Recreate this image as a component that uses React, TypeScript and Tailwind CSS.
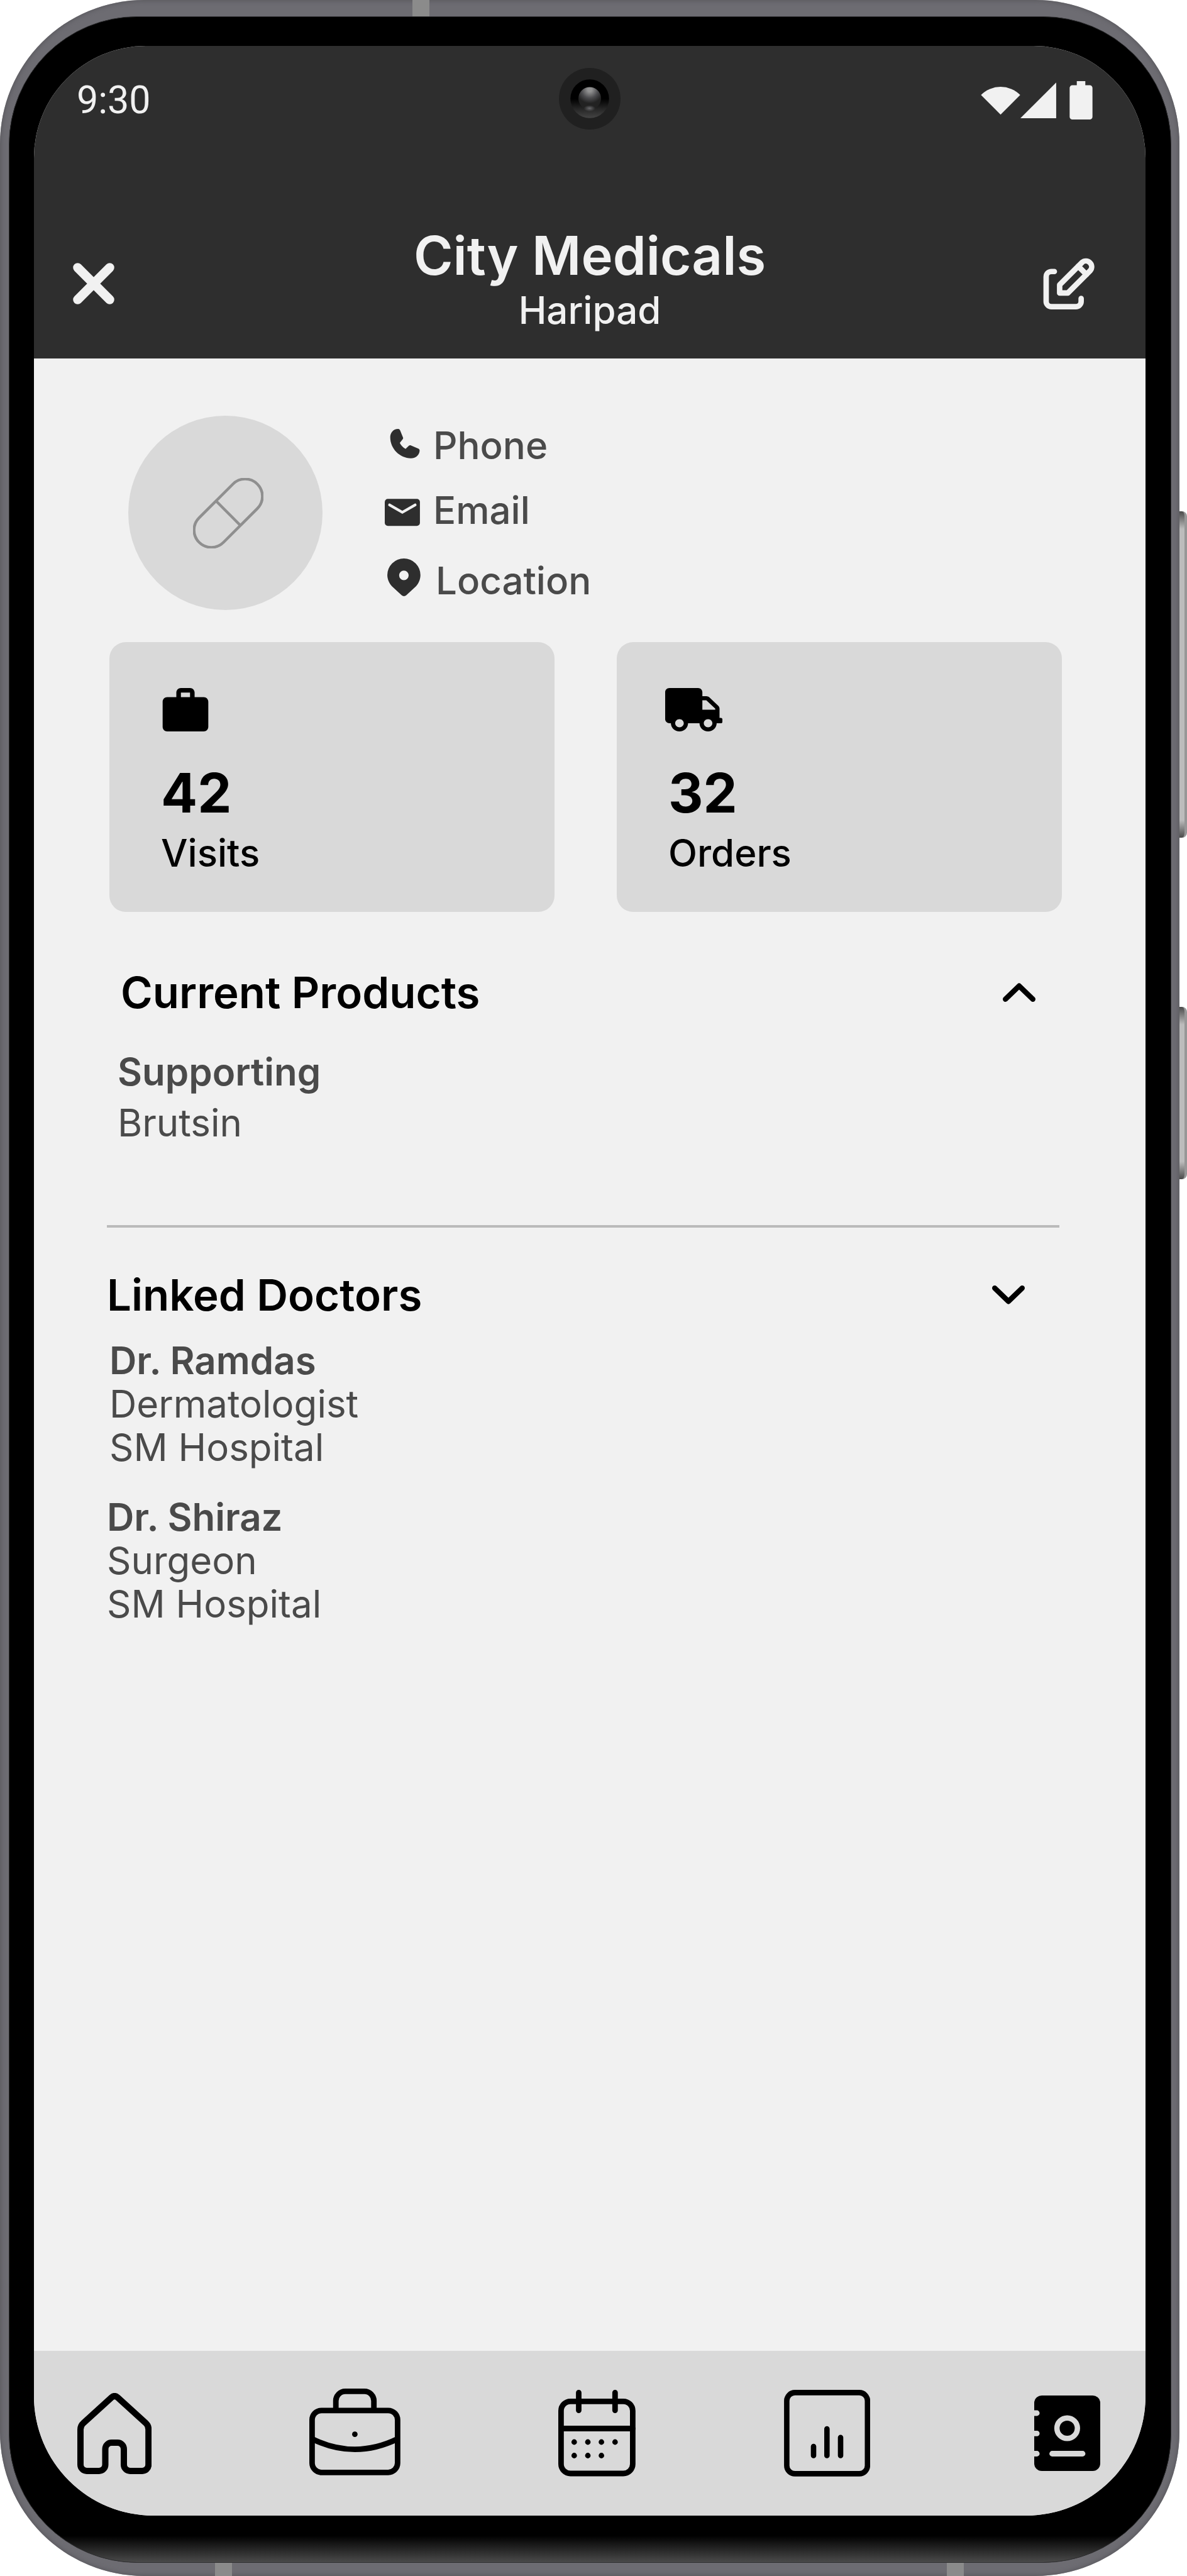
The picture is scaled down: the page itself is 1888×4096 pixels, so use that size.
import React from "react";

type IconProps = { className?: string };

type Doctor = { name: string; speciality: string; hospital: string };

const doctors: Doctor[] = [
  { name: "Dr. Ramdas", speciality: "Dermatologist", hospital: "SM Hospital" },
  { name: "Dr. Shiraz", speciality: "Surgeon", hospital: "SM Hospital" },
];

const StatusIcons = () => (
  <svg viewBox="44 47 654 225" className="h-[61px] w-[178px]" fill="#f1f1f1">
    <path d="M159 243L44 128A163 163 0 0 1 274 128Z" />
    <path d="M275 265L485 55V265Z" />
    <path d="M606 47h50v24h26a16 16 0 0 1 16 16v169a16 16 0 0 1-16 16H580a16 16 0 0 1-16-16V87a16 16 0 0 1 16-16h26Z" />
  </svg>
);

const Camera = () => (
  <svg viewBox="0 0 360 360" className="size-[98px]">
    <defs>
      <linearGradient id="lens" x1="0" y1="0" x2="0" y2="1">
        <stop offset="0.5" stopColor="#000000" />
        <stop offset="0.75" stopColor="#242424" />
        <stop offset="1" stopColor="#444444" />
      </linearGradient>
      <radialGradient id="shine" cx="0.5" cy="0.12" r="0.6">
        <stop offset="0.15" stopColor="#929292" />
        <stop offset="0.6" stopColor="#4c4c4f" />
        <stop offset="1" stopColor="#222222" />
      </radialGradient>
      <radialGradient id="glow">
        <stop offset="0" stopColor="#68686b" />
        <stop offset="1" stopColor="#68686b" stopOpacity="0" />
      </radialGradient>
    </defs>
    <circle cx="180" cy="180" r="180" fill="#202020" />
    <circle cx="180" cy="180" r="113" fill="url(#lens)" />
    <circle cx="180" cy="178" r="66" fill="url(#shine)" />
    <ellipse cx="179" cy="236" rx="34" ry="18" fill="url(#glow)" />
  </svg>
);

const CloseIcon = () => (
  <svg
    viewBox="0 0 66 66"
    className="size-[66px]"
    stroke="#f1f1f1"
    strokeWidth="14.5"
    strokeLinecap="round"
  >
    <path d="M7.5 7.5L58.5 58.5M58.5 7.5L7.5 58.5" />
  </svg>
);

const EditIcon = () => (
  <svg
    viewBox="409 1086 303 302"
    className="h-[82px] w-[83px]"
    fill="none"
    stroke="#f1f1f1"
    strokeWidth="32"
    strokeLinecap="round"
    strokeLinejoin="round"
  >
    <path d="M474 1166H457a31 31 0 0 0-31 31V1341a31 31 0 0 0 31 31H600a31 31 0 0 0 31-31V1324" />
    <path d="M505 1292V1244L636 1113A34 34 0 0 1 684 1161L553 1292Z" />
    <path d="M614 1135L662 1183" />
  </svg>
);

const PillIcon = () => (
  <svg
    viewBox="0 0 112 112"
    className="size-[112px]"
    fill="none"
    stroke="#8f8f8f"
    strokeWidth="4.4"
  >
    <g transform="rotate(-45 56 56)">
      <rect x="-9.5" y="28.5" width="131" height="55" rx="27.5" />
      <path d="M56 28.5V83.5" />
    </g>
  </svg>
);

const PhoneIcon = () => (
  <svg viewBox="22 3 210 264" className="h-[72px] w-[57px]" fill="#2e2e2e">
    <path d="M100 39C108 39 111 45 113 50L129 90C131 94 129 98 126 101L110 121C118 137 129 148 144 156L163 138C166 135 170 134 175 136L220 155C226 158 227 163 226 170C222 196 202 211 175 211C110 211 54 155 54 88C54 62 72 39 100 39Z" />
  </svg>
);

const MailIcon = () => (
  <svg viewBox="22 380 210 264" className="h-[72px] w-[57px]" fill="none">
    <rect x="22" y="447" width="206" height="158" rx="18" fill="#2e2e2e" />
    <path
      d="M50 482L125 525L200 482"
      stroke="#f1f1f1"
      strokeWidth="16"
      strokeLinecap="round"
    />
  </svg>
);

const PinIcon = () => (
  <svg viewBox="22 790 210 264" className="h-[72px] w-[57px]" fill="#2e2e2e">
    <path
      fillRule="evenodd"
      d="M134 793a97 97 0 0 1 97 97c0 24-9 48-26 66l-57 53a20 20 0 0 1-27 0l-57-53c-17-18-27-42-27-66a97 97 0 0 1 97-97ZM134 864a28 28 0 1 0 0 56a28 28 0 1 0 0-56Z"
    />
  </svg>
);

const WorkIcon = () => (
  <svg viewBox="0 2 24 19" className="h-[69px] w-[88px]">
    <path d="M20 6h-4V4c0-1.11-.89-2-2-2h-4c-1.11 0-2 .89-2 2v2H4c-1.11 0-2 .89-2 2v11c0 1.11.89 2 2 2h16c1.11 0 2-.89 2-2V8c0-1.11-.89-2-2-2Zm-6 0h-4V4h4v2Z" />
  </svg>
);

const TruckIcon = () => (
  <svg
    viewBox="0 0 640 512"
    preserveAspectRatio="none"
    className="h-[69px] w-[91px]"
  >
    <path d="M624 352h-16V243.9c0-12.7-5.1-24.9-14.1-33.9L494 110.1c-9-9-21.2-14.1-33.9-14.1H416V48c0-26.5-21.5-48-48-48H48C21.5 0 0 21.5 0 48v320c0 26.5 21.5 48 48 48h16c0 53 43 96 96 96s96-43 96-96h128c0 53 43 96 96 96s96-43 96-96h48c8.8 0 16-7.2 16-16v-32c0-8.8-7.2-16-16-16ZM160 464c-26.5 0-48-21.5-48-48s21.5-48 48-48 48 21.5 48 48-21.5 48-48 48Zm320 0c-26.5 0-48-21.5-48-48s21.5-48 48-48 48 21.5 48 48-21.5 48-48 48Zm80-208H416V144h44.1l99.9 99.9V256Z" />
  </svg>
);

const Chevron = ({ className }: IconProps) => (
  <svg
    viewBox="0 0 52 30"
    className={className}
    fill="none"
    stroke="black"
    strokeWidth="8.4"
    strokeLinecap="round"
    strokeLinejoin="round"
  >
    <path d="M4.2 25.8L26 4.8L47.8 25.8" />
  </svg>
);

const HomeIcon = () => (
  <svg
    viewBox="0 0 118 129"
    className="h-[129px] w-[118px]"
    fill="none"
    stroke="black"
    strokeWidth="10"
  >
    <path d="M5 58C5 54 6.5 50.5 9.5 48L54.5 7Q59.2 3 64 7L109 48C112 50.5 113.2 54 113.2 58V114a10 10 0 0 1-10 10H84a10 10 0 0 1-10-10V89a10 10 0 0 0-10-10H54.5a10 10 0 0 0-10 10V114a10 10 0 0 1-10 10H15a10 10 0 0 1-10-10Z" />
  </svg>
);

const BagIcon = () => (
  <svg
    viewBox="0 0 145 138"
    className="h-[138px] w-[145px]"
    fill="none"
    stroke="black"
    strokeWidth="8.8"
  >
    <rect x="4.4" y="34.8" width="136" height="98.5" rx="15" />
    <path d="M42.2 34V19.4a15 15 0 0 1 15-15H87.7a15 15 0 0 1 15 15V34" />
    <path d="M4.4 80Q72.4 113.2 140.4 80" />
    <circle cx="72.4" cy="72.6" r="4.4" fill="black" stroke="none" />
  </svg>
);

const CalendarIcon = () => (
  <svg
    viewBox="0 0 123 138"
    className="h-[138px] w-[123px]"
    fill="none"
    stroke="black"
    strokeWidth="8.8"
    strokeLinecap="round"
  >
    <rect x="4.4" y="18.3" width="114" height="114.7" rx="15" />
    <path d="M32.5 4.4V32.6M90.3 4.4V32.6" />
    <path d="M4.4 61.5H118.4" />
    <path d="M25.3 83h0M47 83h0M68.6 83h0M90.3 83h0M25.3 104.5h0M47 104.5h0M68.6 104.5h0" />
  </svg>
);

const ChartIcon = () => (
  <svg
    viewBox="0 0 137 138"
    className="h-[138px] w-[137px]"
    fill="none"
    stroke="black"
    strokeWidth="8.6"
    strokeLinecap="round"
  >
    <rect x="4.4" y="4.4" width="128.4" height="129" rx="13" />
    <path d="M47 90V104.5M68.3 62V104.5M90 75.7V104.5" />
  </svg>
);

const ContactsIcon = () => (
  <svg viewBox="0 0 105 120" className="h-[120px] w-[105px]" fill="none">
    <rect width="105" height="120" rx="12" fill="black" />
    <circle cx="52.4" cy="52" r="16.3" stroke="#d9d9d9" strokeWidth="8.5" />
    <path
      d="M28.5 92.5H77M-2 28H4.2M-2 60.3H4.2M-2 92.5H4.2"
      stroke="#d9d9d9"
      strokeWidth="8.8"
      strokeLinecap="round"
    />
  </svg>
);

const Header = () => (
  <header className="relative bg-[#2e2e2e] pt-[50px] pb-[41px] text-[#f1f1f1]">
    <div className="flex items-center justify-between pr-[84px] pl-[68px]">
      <span className="font-[Roboto,sans-serif] text-[61px] leading-[72px]">
        9:30
      </span>
      <StatusIcons />
    </div>
    <div className="absolute top-[35px] left-1/2 -translate-x-1/2">
      <Camera />
    </div>
    <div className="mt-[161px] grid grid-cols-[1fr_auto_1fr] items-center">
      <button
        type="button"
        aria-label="Close"
        className="ml-[62px] justify-self-start pt-4"
      >
        <CloseIcon />
      </button>
      <div className="text-center">
        <h1 className="text-[85px] leading-[101px] font-semibold">
          City Medicals
        </h1>
        <p className="text-[60px] leading-[72px] font-medium">Haripad</p>
      </div>
      <button
        type="button"
        aria-label="Edit"
        className="mr-20 justify-self-end pt-4"
      >
        <EditIcon />
      </button>
    </div>
  </header>
);

const Contact = () => (
  <section className="flex gap-[99px] pl-[150px]">
    <div className="flex size-[309px] shrink-0 items-center justify-center rounded-full bg-[#d9d9d9] pl-2">
      <PillIcon />
    </div>
    <ul className="pt-[11px] text-[60px] leading-[72px] font-medium text-[#4a4a4a]">
      <li>
        <a href="#phone" className="flex items-center gap-5">
          <PhoneIcon />
          Phone
        </a>
      </li>
      <li className="mt-[31px]">
        <a href="#email" className="flex items-center gap-5">
          <MailIcon />
          Email
        </a>
      </li>
      <li className="mt-10">
        <a href="#location" className="flex items-center gap-6">
          <PinIcon />
          Location
        </a>
      </li>
    </ul>
  </section>
);

type StatProps = { icon: React.ReactNode; value: number; label: string };

const StatCard = ({ icon, value, label }: StatProps) => (
  <div className="flex-1 rounded-[26px] bg-[#d9d9d9] pt-[73px] pb-[58px] pl-[77px]">
    {icon}
    <p className="mt-[46px] pl-[5px] text-[86px] leading-[104px] font-bold">
      {value}
    </p>
    <p className="mt-[7px] pl-[5px] text-[60px] leading-[72px] font-medium">
      {label}
    </p>
  </div>
);

const NavBar = () => (
  <nav className="flex h-[262px] items-center justify-between bg-[#d9d9d9] pr-[72px] pl-[69px]">
    <a href="#home" aria-label="Home" className="pr-[14px]">
      <HomeIcon />
    </a>
    <a href="#work" aria-label="Work" className="pr-[14px] pb-1">
      <BagIcon />
    </a>
    <a href="#calendar" aria-label="Calendar">
      <CalendarIcon />
    </a>
    <a href="#reports" aria-label="Reports" className="pr-6">
      <ChartIcon />
    </a>
    <a href="#contacts" aria-label="Contacts">
      <ContactsIcon />
    </a>
  </nav>
);

const App = () => {
  return (
    <div className="relative flex min-h-screen flex-col bg-white pr-3 font-[Inter,sans-serif] text-black">
      {/* volume and power keys */}
      <div className="absolute top-[813px] right-0 h-[519px] w-3 rounded-r-lg border-r-4 border-[#979797] bg-[linear-gradient(#4a4a4a,#bcbcbc_28px,#bcbcbc_calc(100%-28px),#4a4a4a)]" />
      <div className="absolute top-[1601px] right-0 h-[274px] w-3 rounded-r-lg border-r-4 border-[#979797] bg-[linear-gradient(#4a4a4a,#bcbcbc_28px,#bcbcbc_calc(100%-28px),#4a4a4a)]" />

      <div className="relative flex flex-1 flex-col rounded-[229px] bg-[#6d6c72] pt-[26px] pr-[13px] pb-[21px] pl-[14px] shadow-[inset_0_0_6px_2px_#5c5b60]">
        {/* antenna bands */}
        <div className="absolute top-0 left-[656px] h-[26px] w-[27px] bg-[#8b8b8b]" />
        <div className="absolute bottom-0 left-[342px] h-[21px] w-[27px] bg-[#8b8b8b]" />
        <div className="absolute right-[343px] bottom-0 h-[21px] w-[27px] bg-[#8b8b8b]" />

        <div className="relative flex flex-1 flex-col rounded-[204px] border border-[#2e2e30] bg-black bg-[linear-gradient(to_top,#4a4a4a,#000_42px)] pt-[46px] pr-10 pb-[74px] pl-[39px]">
          <div className="flex flex-1 flex-col overflow-hidden rounded-t-[178px] rounded-b-[190px] bg-[#f1f1f1]">
            <Header />

            <main className="flex-1 pt-[91px]">
              <Contact />

              <section className="mt-[51px] flex gap-[99px] pr-[133px] pl-[120px]">
                <StatCard icon={<WorkIcon />} value={42} label="Visits" />
                <StatCard icon={<TruckIcon />} value={32} label="Orders" />
              </section>

              <section className="mt-[86px] pr-[175px] pl-[133px]">
                <button
                  type="button"
                  className="flex w-full items-center justify-between pl-[5px] text-[69px] leading-[84px] font-semibold"
                >
                  Current Products
                  <Chevron className="h-[30px] w-[52px]" />
                </button>
                <div className="mt-12 text-[60px] leading-[72px] text-[#4a4a4a]">
                  <h3 className="font-semibold">Supporting</h3>
                  <p className="mt-[9px]">Brutsin</p>
                </div>
              </section>

              <hr className="mt-[127px] mr-[137px] ml-[116px] border-t-4 border-[#bababa]" />

              <section className="mt-[65px] pr-[192px] pl-[116px]">
                <button
                  type="button"
                  className="flex w-full items-center justify-between text-[69px] leading-[84px] font-semibold"
                >
                  Linked Doctors
                  <Chevron className="h-[30px] w-[52px] rotate-180" />
                </button>
                <ul className="mt-7 flex flex-col gap-[42px] text-[60px] leading-[69px] text-[#4a4a4a]">
                  {doctors.map((doctor) => (
                    <li key={doctor.name} className="first:pl-1">
                      <h3 className="font-semibold">{doctor.name}</h3>
                      <p>{doctor.speciality}</p>
                      <p>{doctor.hospital}</p>
                    </li>
                  ))}
                </ul>
              </section>
            </main>

            <NavBar />
          </div>
        </div>
      </div>
    </div>
  );
};

export default App;
